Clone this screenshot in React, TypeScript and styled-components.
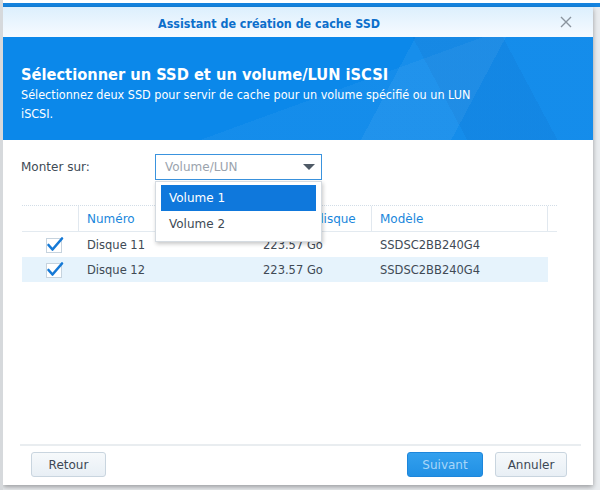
import React from "react";
import styled, { createGlobalStyle } from "styled-components";

const GlobalStyle = createGlobalStyle`
  html, body {
    margin: 0;
    padding: 0;
    background: #ffffff;
  }
  body {
    font-family: "DejaVu Sans", Verdana, sans-serif;
  }
`;

const narrow = `"DejaVu Sans Condensed", "DejaVu Sans", Verdana, sans-serif`;

const Backdrop = styled.div`
  width: 600px;
  height: 490px;
  box-sizing: border-box;
  padding: 7px 7px 5px 3px;
  background: linear-gradient(#ffffff 0, #ffffff 3px, #1584e0 3px, #1584e0 7px, #e9ecef 7px);
  border-left: 3px solid #d6d9dc;
  position: relative;
  overflow: hidden;
`;

const SideMark = styled.div`
  position: absolute;
  left: -3px;
  top: 287px;
  width: 3px;
  height: 46px;
  background: #1a78d2;
`;

const Dialog = styled.div`
  width: 590px;
  height: 478px;
  margin-left: -3px;
  background: #ffffff;
  display: flex;
  flex-direction: column;
  box-shadow: 0 2px 5px rgba(0, 0, 0, 0.35);
  position: relative;
`;

const TitleBar = styled.div`
  height: 30px;
  flex: none;
  display: flex;
  align-items: center;
  justify-content: center;
  padding: 2px 58px 0 0;
  box-sizing: border-box;
  background: linear-gradient(#dceffd, #f7fbff);
  position: relative;
  color: #0c6fcb;
  font-family: ${narrow};
  font-weight: bold;
  font-size: 12.4px;
`;

const CloseButton = styled.div`
  position: absolute;
  right: 20px;
  top: 8px;
  width: 14px;
  height: 14px;
  display: flex;
`;

const Banner = styled.div`
  height: 103px;
  flex: none;
  box-sizing: border-box;
  padding: 28px 20px 0 18px;
  color: #ffffff;
  font-family: ${narrow};
  background:
    linear-gradient(118deg, transparent 0 64%, rgba(255,255,255,0.05) 64% 78%, transparent 78%),
    linear-gradient(62deg, transparent 0 72%, rgba(0,40,120,0.06) 72% 86%, transparent 86%),
    linear-gradient(160deg, transparent 0 55%, rgba(255,255,255,0.04) 55% 100%),
    #0b88ea;
`;

const Heading = styled.div`
  font-size: 16.3px;
  font-weight: bold;
  line-height: 20px;
`;

const SubText = styled.div`
  font-size: 12.5px;
  line-height: 19px;
  width: 470px;
`;

const Content = styled.div`
  flex: 1;
  display: flex;
  flex-direction: column;
  padding: 14px 33px 0 18px;
  position: relative;
`;

const FieldRow = styled.div`
  display: flex;
  align-items: center;
  height: 26px;
`;

const FieldLabel = styled.div`
  width: 134px;
  font-size: 12px;
  color: #404a55;
`;

const Select = styled.div`
  width: 167px;
  height: 26px;
  box-sizing: border-box;
  border: 1px solid #3a93de;
  display: flex;
  align-items: center;
  justify-content: space-between;
  padding: 0 6px 0 9px;
  font-size: 12px;
  color: #9aa3ad;
`;

const Arrow = styled.div`
  width: 0;
  height: 0;
  border-left: 6px solid transparent;
  border-right: 6px solid transparent;
  border-top: 6px solid #4f5a66;
`;

const Menu = styled.div`
  position: absolute;
  left: 152px;
  top: 41px;
  width: 167px;
  box-sizing: border-box;
  padding: 3px 5px 4px;
  background: #ffffff;
  border: 1px solid #d5dbe1;
  box-shadow: 1px 2px 4px rgba(0, 0, 0, 0.22);
  z-index: 2;
`;

const MenuItem = styled.div<{ $active?: boolean }>`
  height: 26px;
  display: flex;
  align-items: center;
  padding-left: 8px;
  font-size: 12px;
  background: ${(p) => (p.$active ? "#0f78dc" : "transparent")};
  color: ${(p) => (p.$active ? "#ffffff" : "#404a55")};
`;

const Table = styled.div`
  margin-top: 25px;
  width: 535px;
  margin-left: 1px;
`;

const HeaderRow = styled.div`
  display: grid;
  grid-template-columns: 57px 176px 117px 176px 9px;
  height: 25px;
  border-top: 1px dotted #d2dde7;
  border-bottom: 1px solid #e3eaf0;
`;

const HeaderCell = styled.div<{ $last?: boolean }>`
  display: flex;
  align-items: center;
  padding-left: 8px;
  font-size: 12px;
  color: #1a87dc;
  border-right: ${(p) => (p.$last ? "none" : "1px solid #e1e8ef")};
  white-space: nowrap;
  overflow: hidden;
`;

const Row = styled.div<{ $selected?: boolean }>`
  display: grid;
  grid-template-columns: 57px 176px 117px 176px;
  width: 526px;
  height: 25px;
  background: ${(p) => (p.$selected ? "#e6f3fc" : "transparent")};
`;

const Cell = styled.div`
  display: flex;
  align-items: center;
  padding-left: 8px;
  font-size: 11.5px;
  color: #404a55;
`;

const CheckCell = styled.div`
  display: flex;
  align-items: center;
  padding-left: 24px;
`;

const Footer = styled.div`
  flex: none;
  margin: 0 12px 0 17px;
  border-top: 2px solid #e9edf0;
  padding: 6px 14px 8px 11px;
  display: flex;
  align-items: center;
  gap: 12px;
`;

const Spacer = styled.div`
  flex: 1;
`;

const Button = styled.div<{ $primary?: boolean; $w: number }>`
  width: ${(p) => p.$w}px;
  height: 25px;
  box-sizing: border-box;
  border-radius: 3px;
  display: flex;
  align-items: center;
  justify-content: center;
  font-size: 12px;
  border: 1px solid ${(p) => (p.$primary ? "#1d86db" : "#c9d5df")};
  background: ${(p) =>
    p.$primary ? "linear-gradient(#33a0ee, #2190e4)" : "linear-gradient(#f6f9fb, #e8eff5)"};
  color: ${(p) => (p.$primary ? "#a9d6f8" : "#3c4754")};
`;

const Check = () => (
  <svg width="18" height="17" viewBox="0 0 18 17">
    <rect x="0.5" y="2.5" width="15" height="14" fill="#fff" stroke="#c6d3de" />
    <path d="M2.5 9 L6.5 13.5 L16 2.5" fill="none" stroke="#1579d6" strokeWidth="2.6" strokeLinecap="round" strokeLinejoin="round" />
  </svg>
);

const disks = [
  { num: "Disque 11", size: "223.57 Go", model: "SSDSC2BB240G4" },
  { num: "Disque 12", size: "223.57 Go", model: "SSDSC2BB240G4" },
];

export default function App() {
  return (
    <>
      <GlobalStyle />
      <Backdrop>
        <SideMark />
        <Dialog>
          <TitleBar>
            Assistant de création de cache SSD
            <CloseButton>
              <svg width="14" height="14" viewBox="0 0 14 14">
                <path d="M2 2 L12 12 M12 2 L2 12" stroke="#8a949e" strokeWidth="1.4" />
              </svg>
            </CloseButton>
          </TitleBar>
          <Banner>
            <Heading>Sélectionner un SSD et un volume/LUN iSCSI</Heading>
            <SubText>
              Sélectionnez deux SSD pour servir de cache pour un volume spécifié ou un LUN iSCSI.
            </SubText>
          </Banner>
          <Content>
            <FieldRow>
              <FieldLabel>Monter sur:</FieldLabel>
              <Select>
                Volume/LUN
                <Arrow />
              </Select>
            </FieldRow>
            <Menu>
              <MenuItem $active>Volume 1</MenuItem>
              <MenuItem>Volume 2</MenuItem>
            </Menu>
            <Table>
              <HeaderRow>
                <HeaderCell />
                <HeaderCell>Numéro</HeaderCell>
                <HeaderCell>Taille du disque</HeaderCell>
                <HeaderCell>Modèle</HeaderCell>
                <HeaderCell $last />
              </HeaderRow>
              {disks.map((d, i) => (
                <Row key={d.num} $selected={i === 1}>
                  <CheckCell>
                    <Check />
                  </CheckCell>
                  <Cell>{d.num}</Cell>
                  <Cell>{d.size}</Cell>
                  <Cell>{d.model}</Cell>
                </Row>
              ))}
            </Table>
          </Content>
          <Footer>
            <Button $w={75}>Retour</Button>
            <Spacer />
            <Button $primary $w={76}>Suivant</Button>
            <Button $w={72}>Annuler</Button>
          </Footer>
        </Dialog>
      </Backdrop>
    </>
  );
}
